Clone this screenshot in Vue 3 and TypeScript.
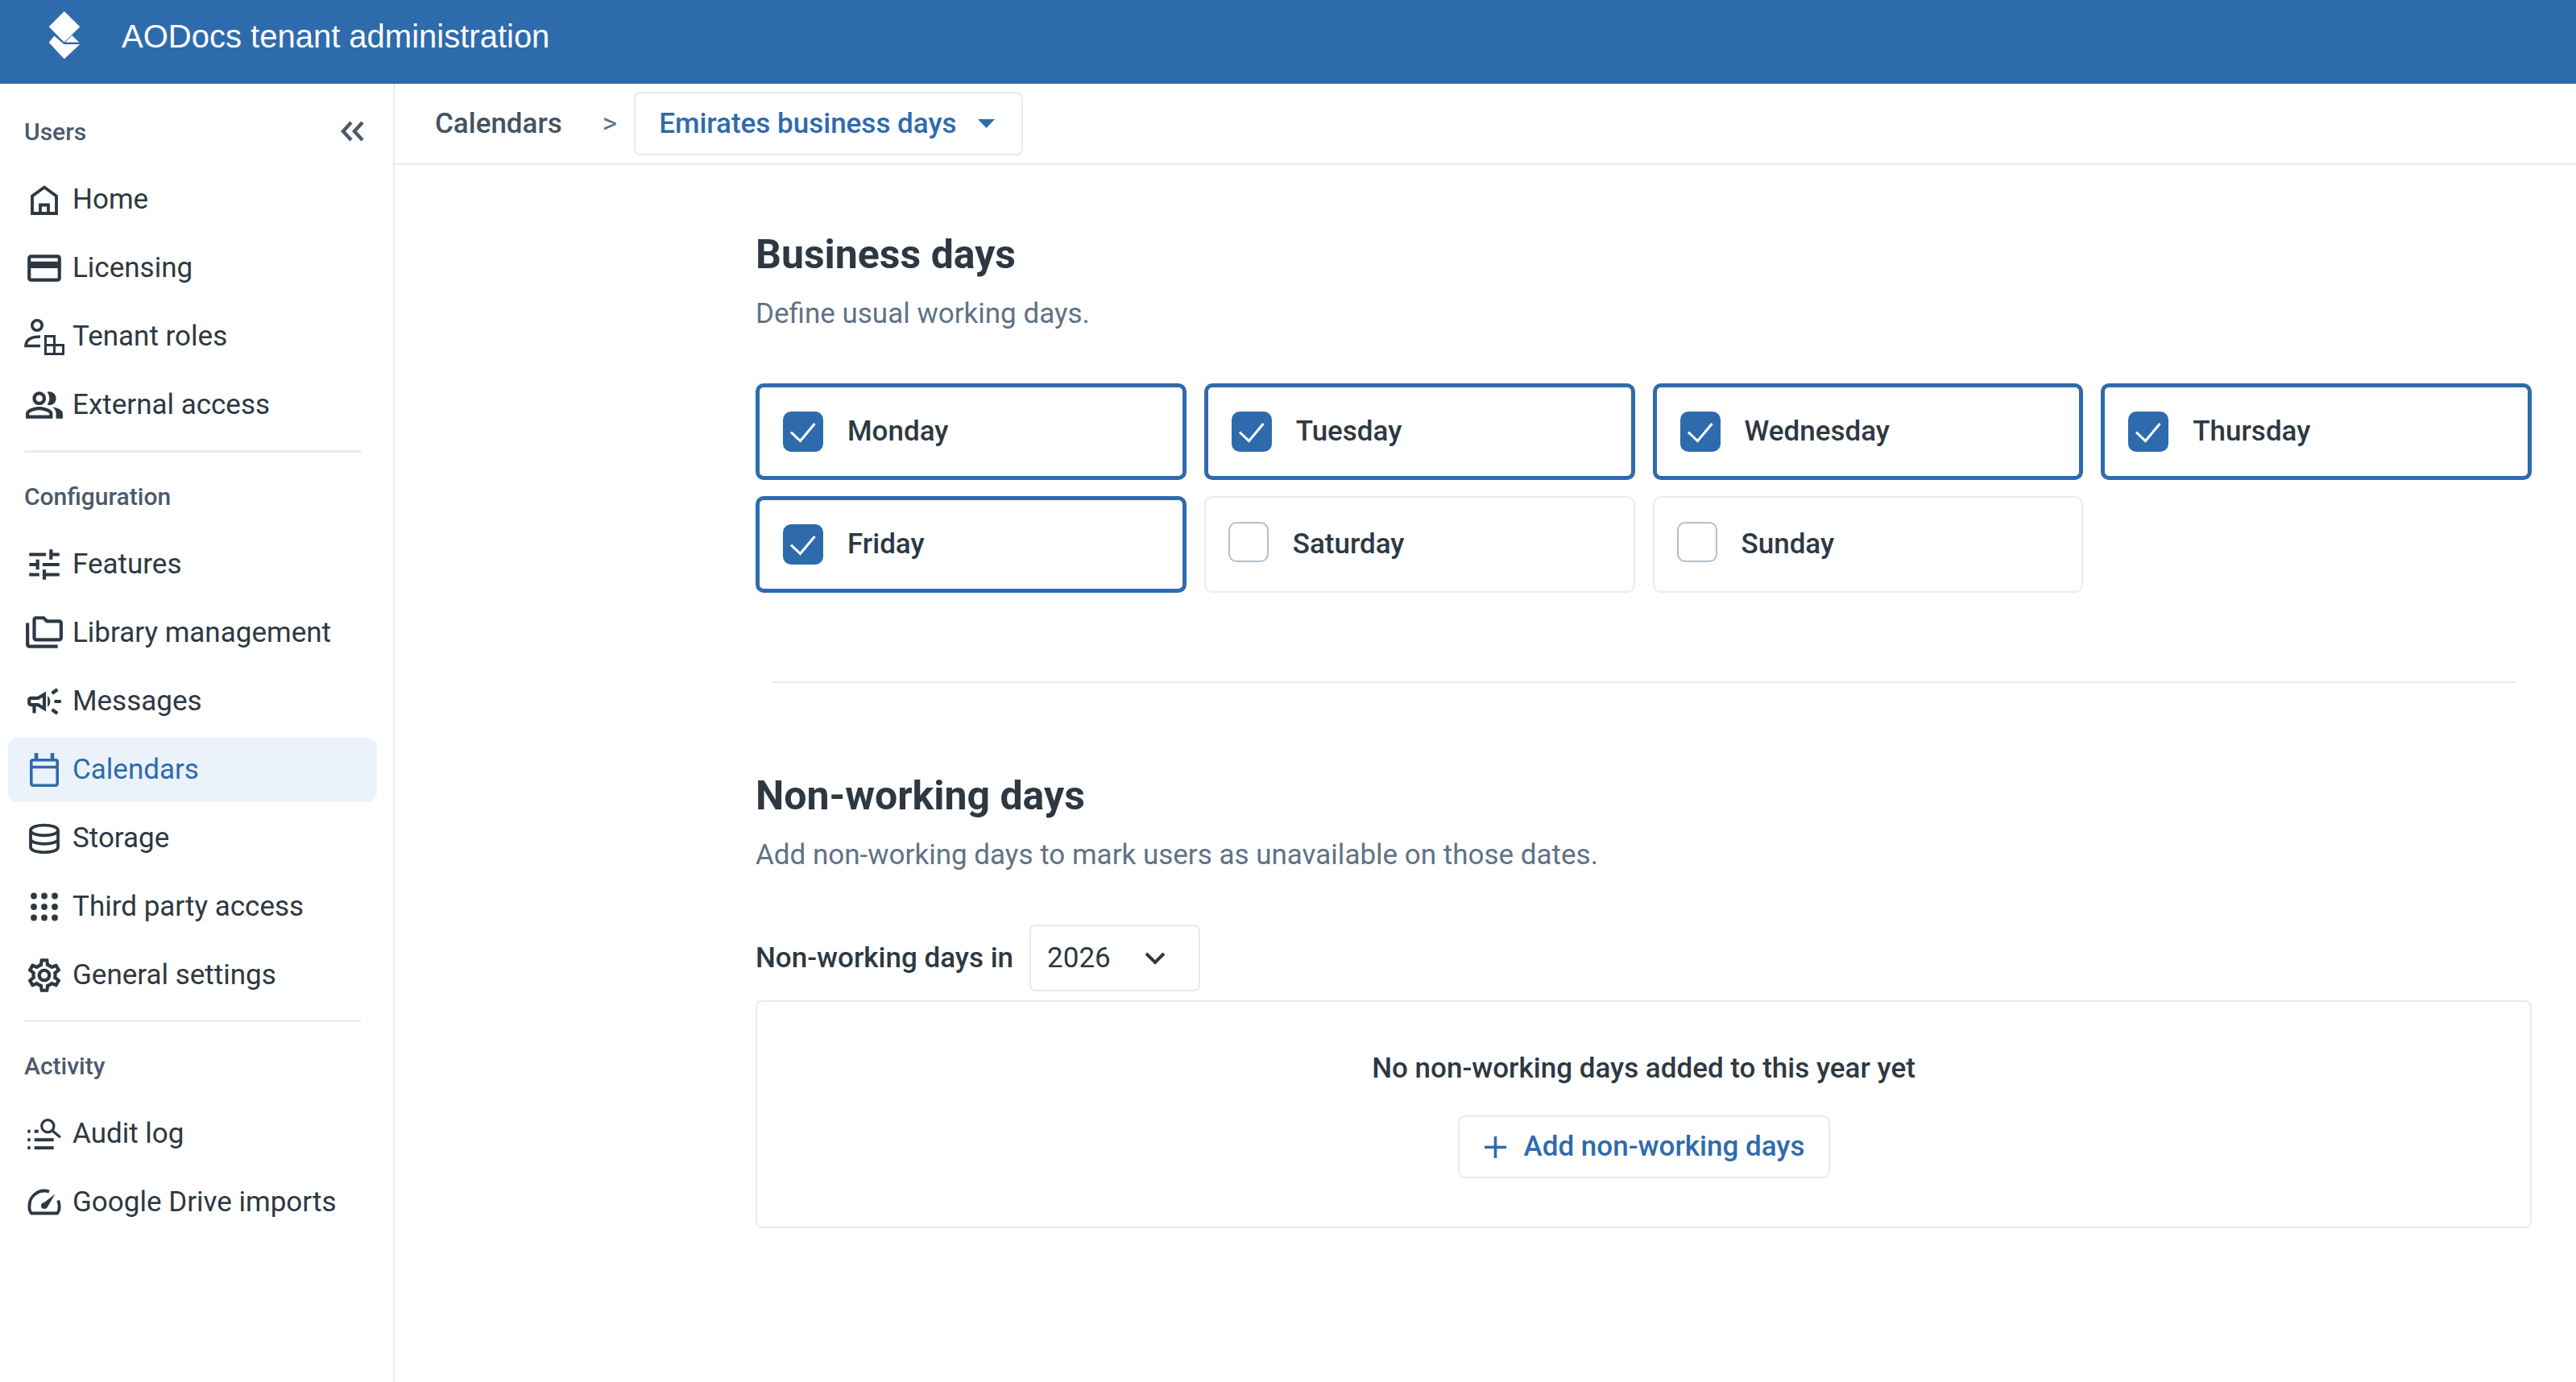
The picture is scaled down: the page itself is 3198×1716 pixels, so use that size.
<script setup lang="ts">
interface IconPart {
  d: string
  sw?: number
}
interface NavItem {
  label: string
  view?: string
  parts: IconPart[]
  active?: boolean
}
interface NavGroup {
  title: string
  collapse?: boolean
  items: NavItem[]
}

const VIEW_50 = '0 0 50 50'

const circle = (x: number, y: number, r: number) =>
  `M${x - r} ${y}a${r} ${r} 0 1 0 ${2 * r} 0a${r} ${r} 0 1 0 ${-2 * r} 0z`

const appsDots = [11.5, 25, 38.5]
  .flatMap((y) => [12, 25, 38].map((x) => circle(x, y, 3.9)))
  .join('')

const groups: NavGroup[] = [
  {
    title: 'Users',
    collapse: true,
    items: [
      {
        label: 'Home',
        view: VIEW_50,
        parts: [{ d: 'M25 9.5L40 20.5V42H10V20.5ZM20 42V31.5H30V42', sw: 3.8 }]
      },
      {
        label: 'Licensing',
        parts: [{ d: 'M20 4H4c-1.11 0-1.99.89-1.99 2L2 18c0 1.11.89 2 2 2h16c1.11 0 2-.89 2-2V6c0-1.11-.89-2-2-2zm0 14H4v-6h16v6zm0-10H4V6h16v2z' }]
      },
      {
        label: 'Tenant roles',
        view: VIEW_50,
        parts: [
          { d: circle(16, 11, 6.2), sw: 3.6 },
          { d: 'M20 25C10 25 2 28 2 36.5H20', sw: 3.6 },
          { d: 'M26.5 24.5h11v11h-11zM26.5 35.5h11v11h-11zM37.5 35.5h11v11h-11z', sw: 3 }
        ]
      },
      {
        label: 'External access',
        parts: [{ d: 'M16.67 13.13C18.04 14.06 19 15.32 19 17v3h4v-3c0-2.18-3.57-3.47-6.33-3.87zM15 12c2.21 0 4-1.79 4-4s-1.79-4-4-4c-.47 0-.91.1-1.33.24C14.5 5.27 15 6.58 15 8s-.5 2.73-1.33 3.76c.42.14.86.24 1.33.24zM9 12c2.21 0 4-1.79 4-4s-1.79-4-4-4-4 1.79-4 4 1.79 4 4 4zm0-6c1.1 0 2 .9 2 2s-.9 2-2 2-2-.9-2-2 .9-2 2-2zM9 13c-2.67 0-8 1.34-8 4v3h16v-3c0-2.66-5.33-4-8-4zm6 5H3v-.99C3.2 16.29 6.3 15 9 15s5.8 1.29 6 2v1z' }]
      }
    ]
  },
  {
    title: 'Configuration',
    items: [
      { label: 'Features', parts: [{ d: 'M3 17v2h6v-2H3zM3 5v2h10V5H3zm10 16v-2h8v-2h-8v-2h-2v6h2zM7 9v2H3v2h4v2h2V9H7zm14 4v-2H11v2h10zm-6-4h2V7h4V5h-4V3h-2v6z' }] },
      {
        label: 'Library management',
        parts: [{ d: 'M3 19h17v2H3c-1.1 0-2-.9-2-2V6h2v13zM23 6v9c0 1.1-.9 2-2 2H7c-1.1 0-2-.9-2-2l.01-11C5.01 2.9 5.9 2 7 2h5l2 2h7c1.1 0 2 .9 2 2zM7 15h14V6h-7.83l-2-2H7v11z' }]
      },
      {
        label: 'Messages',
        parts: [{ d: 'M18 11v2h4v-2h-4zm-2 6.61c.96.71 2.21 1.65 3.2 2.39.4-.53.8-1.07 1.2-1.6-.99-.74-2.24-1.68-3.2-2.4-.4.54-.8 1.08-1.2 1.61zM20.4 5.6c-.4-.53-.8-1.07-1.2-1.6-.99.74-2.24 1.68-3.2 2.4.4.53.8 1.07 1.2 1.6.96-.72 2.21-1.65 3.2-2.4zM4 9c-1.1 0-2 .9-2 2v2c0 1.1.9 2 2 2h1v4h2v-4h1l5 3V6L8 9H4zm5.03 1.71L11 9.53v4.94l-1.97-1.18-.48-.29H4v-2h4.55l.48-.29zM15.5 12c0-1.33-.58-2.53-1.5-3.35v6.69c.92-.81 1.5-2.01 1.5-3.34z' }]
      },
      {
        label: 'Calendars',
        view: VIEW_50,
        active: true,
        parts: [
          { d: 'M11 12.8H39Q41.2 12.8 41.2 15V41.5Q41.2 44.2 38.5 44.2H11.5Q8.8 44.2 8.8 41.5V15Q8.8 12.8 11 12.8ZM8.8 21.5H41.2', sw: 3.6 },
          { d: 'M15 4V12M35 4V12', sw: 4.6 }
        ]
      },
      {
        label: 'Storage',
        view: VIEW_50,
        parts: [
          { d: 'M8 15C8 6.5 42 6.5 42 15C42 23.5 8 23.5 8 15ZM8 15V36C8 44.5 42 44.5 42 36V15M8 25.5C8 34 42 34 42 25.5', sw: 3.8 }
        ]
      },
      { label: 'Third party access', view: VIEW_50, parts: [{ d: appsDots }] },
      {
        label: 'General settings',
        parts: [{ d: 'M19.43 12.98c.04-.32.07-.64.07-.98 0-.34-.03-.66-.07-.98l2.11-1.65c.19-.15.24-.42.12-.64l-2-3.46c-.09-.16-.26-.25-.44-.25-.06 0-.12.01-.17.03l-2.49 1c-.52-.4-1.08-.73-1.69-.98l-.38-2.65C14.46 2.18 14.25 2 14 2h-4c-.25 0-.46.18-.49.42l-.38 2.65c-.61.25-1.17.59-1.69.98l-2.49-1c-.06-.02-.12-.03-.18-.03-.17 0-.34.09-.43.25l-2 3.46c-.13.22-.07.49.12.64l2.11 1.65c-.04.32-.07.65-.07.98 0 .33.03.66.07.98l-2.11 1.65c-.19.15-.24.42-.12.64l2 3.46c.09.16.26.25.44.25.06 0 .12-.01.17-.03l2.49-1c.52.4 1.08.73 1.69.98l.38 2.65c.03.24.24.42.49.42h4c.25 0 .46-.18.49-.42l.38-2.65c.61-.25 1.17-.59 1.69-.98l2.49 1c.06.02.12.03.18.03.17 0 .34-.09.43-.25l2-3.46c.12-.22.07-.49-.12-.64l-2.11-1.65zm-1.98-1.71c.04.31.05.52.05.73 0 .21-.02.43-.05.73l-.14 1.13.89.7 1.08.84-.7 1.21-1.27-.51-1.04-.42-.9.68c-.43.32-.84.56-1.25.73l-1.06.43-.16 1.13-.2 1.35h-1.4l-.19-1.35-.16-1.13-1.06-.43c-.43-.18-.83-.41-1.23-.71l-.91-.7-1.06.43-1.27.51-.7-1.21 1.08-.84.89-.7-.14-1.13c-.03-.31-.05-.54-.05-.74s.02-.43.05-.73l.14-1.13-.89-.7-1.08-.84.7-1.21 1.27.51 1.04.42.9-.68c.43-.32.84-.56 1.25-.73l1.06-.43.16-1.13.2-1.35h1.39l.19 1.35.16 1.13 1.06.43c.43.18.83.41 1.23.71l.91.7 1.06-.43 1.27-.51.7 1.21-1.07.85-.89.7.14 1.13zM12 8c-2.21 0-4 1.79-4 4s1.79 4 4 4 4-1.79 4-4-1.79-4-4-4zm0 6c-1.1 0-2-.9-2-2s.9-2 2-2 2 .9 2 2-.9 2-2 2z' }]
      }
    ]
  },
  {
    title: 'Activity',
    items: [
      {
        label: 'Audit log',
        view: VIEW_50,
        parts: [
          { d: circle(29.3, 15.3, 7.6) + 'M35 21L45 29.3', sw: 3.2 },
          { d: 'M4.3 19.7h3.4v4h-3.4zM12.7 19.7h5v4h-5zM4.3 30.3h3.4v4h-3.4zM12.7 30.3h24v4h-24zM4.3 40.3h3.4v4h-3.4zM12.7 40.3h24v4h-24z' }
        ]
      },
      {
        label: 'Google Drive imports',
        view: VIEW_50,
        parts: [
          { d: 'M31 11.6A18.5 18.5 0 0 0 6.5 29.5C6.2 33 6.6 36 9 38.5H41C43.5 36 44 33 43.5 28C43.3 26 42.7 24 42 22.5', sw: 3.8 },
          { d: 'M38.5 14.5L28.5 31.5C26 34 21.5 33.5 21 30C20.5 27 22.5 25.5 25 25Z' }
        ]
      }
    ]
  }
]

const days = [
  { name: 'Monday', checked: true },
  { name: 'Tuesday', checked: true },
  { name: 'Wednesday', checked: true },
  { name: 'Thursday', checked: true },
  { name: 'Friday', checked: true },
  { name: 'Saturday', checked: false },
  { name: 'Sunday', checked: false }
]
</script>

<template>
  <div class="app">
    <header class="app-header">
      <svg class="logo" viewBox="0 0 80 90" width="80" height="90">
        <polygon points="39.7,14 59.3,33.3 39.7,52.5 20.7,33.3" fill="#fff" />
        <polygon points="49.3,44 58.3,52.5 41,52.5" fill="#fff" />
        <polygon points="27.3,44.5 39.5,55 59.3,55 39.7,73.3 20.7,52.7" fill="#fff" />
      </svg>
      <span class="app-title">AODocs tenant administration</span>
    </header>

    <div class="body">
      <aside class="sidebar">
        <section v-for="(group, i) in groups" :key="group.title" class="group" :class="{ ruled: i > 0 }">
          <div class="group-title">
            <span>{{ group.title }}</span>
            <svg v-if="group.collapse" class="collapse" viewBox="0 0 30 26" width="30" height="26">
              <path d="M13 2L3 13L13 24M27 2L17 13L27 24" fill="none" stroke="currentColor" stroke-width="4.4" />
            </svg>
          </div>
          <ul class="nav">
            <li v-for="item in group.items" :key="item.label" class="nav-item" :class="{ active: item.active }">
              <svg class="nav-icon" :viewBox="item.view ?? '0 0 24 24'" width="50" height="50">
                <path
                  v-for="(part, n) in item.parts"
                  :key="n"
                  :d="part.d"
                  :fill="part.sw ? 'none' : 'currentColor'"
                  :stroke="part.sw ? 'currentColor' : 'none'"
                  :stroke-width="part.sw"
                />
              </svg>
              <span class="nav-label">{{ item.label }}</span>
            </li>
          </ul>
        </section>
      </aside>

      <main class="main">
        <div class="topbar">
          <span class="crumb">Calendars</span>
          <span class="crumb-sep">&gt;</span>
          <div class="crumb-select">
            <span>Emirates business days</span>
            <svg viewBox="0 0 21 11" width="21" height="11"><polygon points="0,0 21,0 10.5,11" fill="currentColor" /></svg>
          </div>
        </div>

        <div class="content">
          <h2 class="title">Business days</h2>
          <p class="desc">Define usual working days.</p>
          <div class="day-grid">
            <label v-for="day in days" :key="day.name" class="day" :class="{ on: day.checked }">
              <span class="box">
                <svg v-if="day.checked" viewBox="0 0 50 50" width="50" height="50">
                  <path d="M10 25.7L21.5 36.5L39.5 15" fill="none" stroke="#fff" stroke-width="3" />
                </svg>
              </span>
              <span class="day-name">{{ day.name }}</span>
            </label>
          </div>

          <hr class="rule" />

          <h2 class="title second">Non-working days</h2>
          <p class="desc">Add non-working days to mark users as unavailable on those dates.</p>

          <div class="year-row">
            <span class="year-label">Non-working days in</span>
            <div class="year-select">
              <span>2026</span>
              <svg viewBox="0 0 26 16" width="26" height="16">
                <path d="M2 2L13 13L24 2" fill="none" stroke="currentColor" stroke-width="4" />
              </svg>
            </div>
          </div>

          <div class="empty">
            <p class="empty-text">No non-working days added to this year yet</p>
            <button class="add-btn" type="button">
              <svg viewBox="0 0 27 27" width="27" height="27">
                <path d="M13.5 0V27M0 13.5H27" fill="none" stroke="currentColor" stroke-width="3.6" />
              </svg>
              <span class="add-label">Add non-working days</span>
            </button>
          </div>
        </div>
      </main>
    </div>
  </div>
</template>

<style>
html,
body {
  margin: 0;
  background: #fff;
}
</style>

<style scoped>
.app {
  display: flex;
  flex-direction: column;
  height: 1716px;
  font-family: Roboto, 'Liberation Sans', sans-serif;
  font-size: 35px;
  color: #2e3842;
  overflow: hidden;
}

.app-header {
  display: flex;
  align-items: center;
  flex: none;
  box-sizing: border-box;
  height: 104px;
  padding: 0 0 14px 40px;
  background: #2e6bad;
  color: #fff;
}

.app-title {
  margin-left: 31px;
  font-family: 'Liberation Sans', Arial, sans-serif;
  font-size: 40px;
}

.body {
  display: flex;
  flex: 1;
  min-height: 0;
}

.sidebar {
  flex: none;
  box-sizing: border-box;
  width: 490px;
  padding-top: 39px;
  border-right: 2px solid #e6eaef;
}

.group.ruled {
  margin: 16px 40px 0 30px;
  padding-top: 34px;
  border-top: 3px solid #e9edf1;
}

.group.ruled:last-child {
  margin-top: 15px;
}

.group-title {
  display: flex;
  align-items: center;
  justify-content: space-between;
  height: 40px;
  padding: 0 35px 0 30px;
  font-size: 30px;
  font-weight: 500;
  color: #4a5a6b;
}

.group.ruled .group-title {
  padding-left: 0;
}

.collapse {
  color: #4a5a6b;
}

.nav {
  display: flex;
  flex-direction: column;
  gap: 5px;
  margin: 25px 20px 0 10px;
  padding: 0;
  list-style: none;
}

.group.ruled .nav {
  margin: 25px -20px 0 -20px;
}

.nav-item {
  display: flex;
  align-items: center;
  gap: 10px;
  height: 80px;
  padding-left: 20px;
  border-radius: 12px;
}

.nav-label {
  position: relative;
  top: -1px;
}

.nav-item.active {
  background: #ebf2f9;
  color: #2e6bad;
}

.nav-icon {
  flex: none;
}

.main {
  flex: 1;
  min-width: 0;
}

.topbar {
  display: flex;
  align-items: center;
  box-sizing: border-box;
  height: 101px;
  padding-left: 50px;
  border-bottom: 2px solid #e6eaef;
  font-weight: 500;
}

.crumb {
  color: #45525f;
}

.crumb-sep {
  margin: 0 21px 0 50px;
  color: #5f7285;
  font-weight: 400;
}

.crumb-select {
  display: flex;
  align-items: center;
  gap: 26px;
  box-sizing: border-box;
  height: 79px;
  padding: 0 33px 0 29px;
  border: 2px solid #e6eaef;
  border-radius: 8px;
  color: #2e6bad;
}

.content {
  padding: 81px 55px 0 448px;
}

.title {
  margin: 0;
  font-size: 50px;
  line-height: 60px;
  font-weight: 700;
}

.title.second {
  margin-top: 110px;
}

.desc {
  margin: 21px 0 0;
  line-height: 46px;
  color: #5f7285;
}

.day-grid {
  display: grid;
  grid-template-columns: repeat(4, 1fr);
  gap: 20px 22px;
  margin-top: 63px;
}

.day {
  display: flex;
  align-items: center;
  gap: 30px;
  box-sizing: border-box;
  height: 120px;
  padding-left: 28px;
  border: 2px solid #e9edf1;
  border-radius: 10px;
  font-weight: 500;
}

.day.on {
  padding-left: 29px;
  border: 5px solid #2e6bad;
}

.day-name {
  position: relative;
  top: -1px;
}

.box {
  position: relative;
  top: -3px;
  flex: none;
  box-sizing: border-box;
  width: 50px;
  height: 50px;
  border: 2px solid #afc1cf;
  border-radius: 10px;
}

.box svg {
  display: block;
}

.on .box {
  top: 0;
  border: 0;
  background: #2e6bad;
}

.rule {
  height: 2px;
  margin: 110px 20px 0;
  border: 0;
  background: #e6eaef;
}

.year-row {
  display: flex;
  align-items: center;
  gap: 20px;
  margin-top: 63px;
}

.year-label {
  font-weight: 500;
}

.year-select {
  display: flex;
  align-items: center;
  gap: 42px;
  box-sizing: border-box;
  width: 212px;
  height: 83px;
  padding-left: 20px;
  border: 2px solid #e6eaef;
  border-radius: 8px;
}

.empty {
  display: flex;
  flex-direction: column;
  align-items: center;
  box-sizing: border-box;
  height: 283px;
  margin-top: 11px;
  padding-top: 60px;
  border: 2px solid #e6eaef;
  border-radius: 8px;
}

.empty-text {
  margin: 0;
  line-height: 46px;
  font-weight: 500;
}

.add-btn {
  display: flex;
  align-items: center;
  gap: 22px;
  box-sizing: border-box;
  width: 462px;
  height: 78px;
  margin-top: 35px;
  padding: 0 0 0 31px;
  border: 2px solid #e6eaef;
  border-radius: 8px;
  background: #fff;
  color: #2e6bad;
  font: inherit;
  font-weight: 500;
}

.add-label {
  position: relative;
  top: -1px;
}
</style>
